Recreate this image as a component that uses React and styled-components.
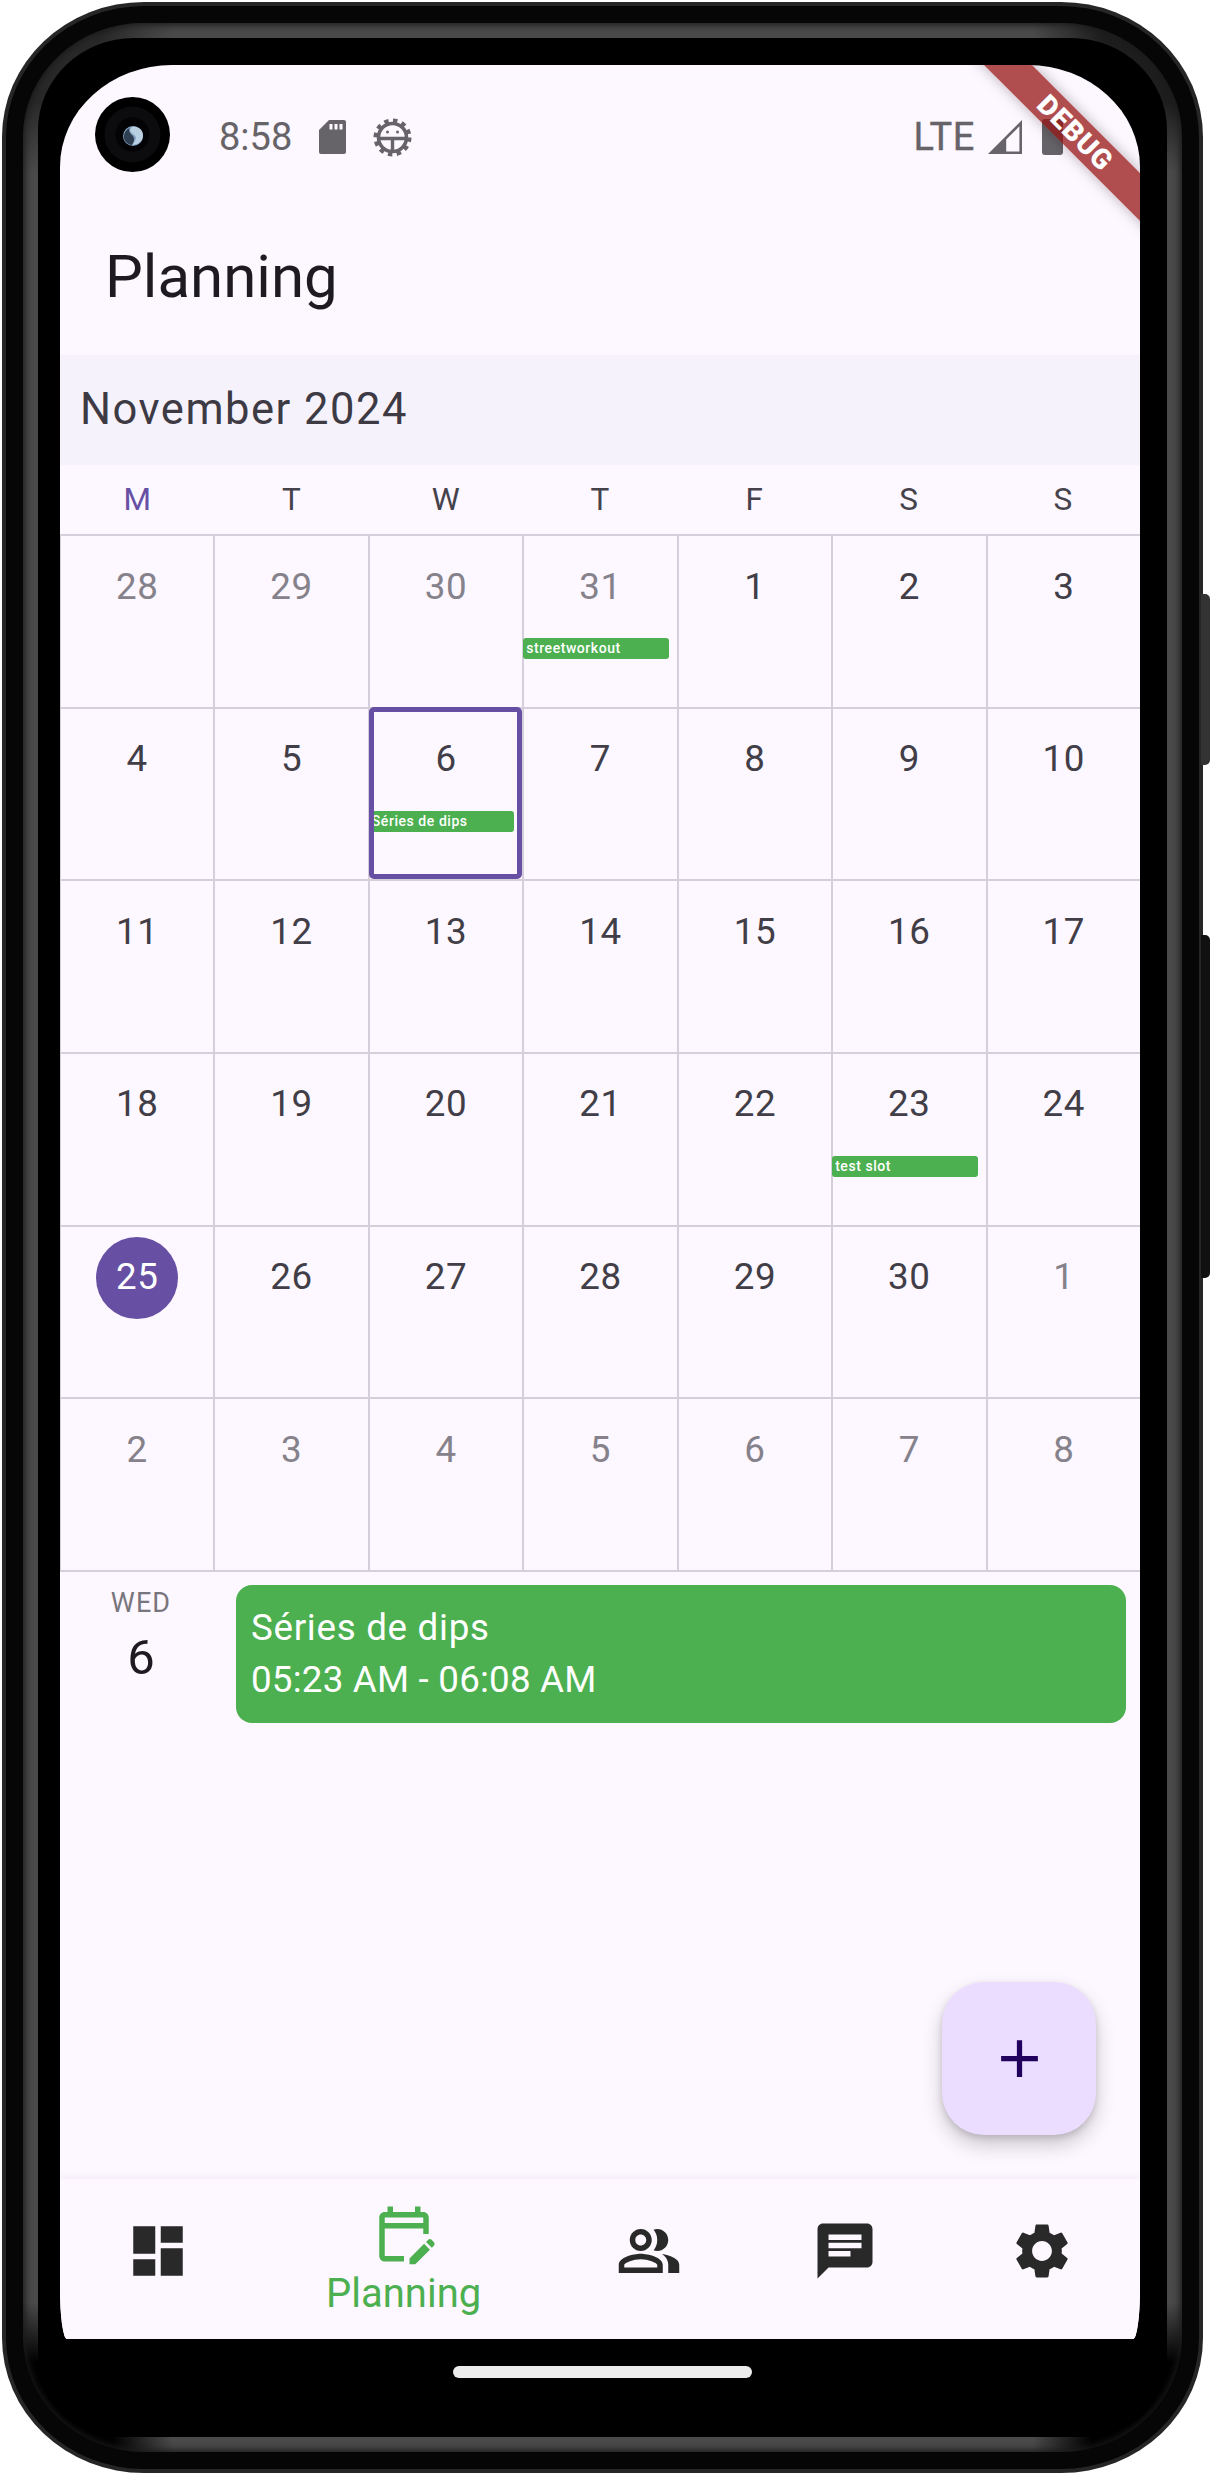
import styled, { createGlobalStyle } from 'styled-components'
import {
	MdDashboard,
	MdOutlineEditCalendar,
	MdOutlinePeopleAlt,
	MdChat,
	MdSettings,
	MdAdd,
} from 'react-icons/md'

const WEEK_DAYS = ['M', 'T', 'W', 'T', 'F', 'S', 'S']

const DAYS = [
	{ n: 28, muted: true },
	{ n: 29, muted: true },
	{ n: 30, muted: true },
	{ n: 31, muted: true, event: 'streetworkout' },
	{ n: 1 },
	{ n: 2 },
	{ n: 3 },
	{ n: 4 },
	{ n: 5 },
	{ n: 6, selected: true, event: 'Séries de dips' },
	...[7, 8, 9, 10, 11, 12, 13, 14, 15, 16, 17, 18, 19, 20, 21, 22].map((n) => ({ n })),
	{ n: 23, event: 'test slot' },
	{ n: 24 },
	{ n: 25, today: true },
	...[26, 27, 28, 29, 30].map((n) => ({ n })),
	...[1, 2, 3, 4, 5, 6, 7, 8].map((n) => ({ n, muted: true })),
]

const NAV_ITEMS = [
	{ icon: MdDashboard },
	{ icon: MdOutlineEditCalendar, label: 'Planning' },
	{ icon: MdOutlinePeopleAlt },
	{ icon: MdChat },
	{ icon: MdSettings },
]

function CameraHole() {
	return (
		<Camera viewBox="0 0 75 75">
			<circle cx="37.5" cy="37.5" r="37.5" fill="#000" />
			<circle cx="37.5" cy="37.5" r="28" fill="#0c0c0f" />
			<circle cx="37.5" cy="37.5" r="17" fill="#030305" />
			<circle cx="38" cy="39" r="10" fill="#7f9fbd" />
			<path d="M38 29.5c-4 2-4 5 0 7.5s4 5-1 11c6 0 11-4 11-9.5s-4-9-10-9z" fill="#b9cfe2" />
			<path d="M35 31c-6 2-8 10-4 14 2 2 4 3 6 3 2-3 3-6 1-9-3-3-5-5-3-8z" fill="#2f3f52" />
		</Camera>
	)
}

function SdIcon() {
	return (
		<svg width="27" height="34" viewBox="0 0 27 34">
			<path d="M10 0H25a2 2 0 0 1 2 2V32a2 2 0 0 1-2 2H2a2 2 0 0 1-2-2V10Z" fill="#666468" />
			<path d="M10.5 4h3V9.5h-3zM15.5 4h3V9.5h-3zM20.5 4h3V9.5h-3z" fill="#fdf7ff" />
		</svg>
	)
}

function DebugIcon() {
	return (
		<svg width="39" height="39" viewBox="0 0 39 39" fill="none">
			<circle cx="19.5" cy="19.5" r="14" stroke="#666468" strokeWidth="3.6" />
			<circle cx="19.5" cy="19.5" r="17" stroke="#666468" strokeWidth="4" strokeDasharray="4.45 4.45" />
			<path d="M7 20.5h25M19.5 20.5V33" stroke="#666468" strokeWidth="3.4" />
			<circle cx="14.5" cy="14" r="1.5" fill="#666468" />
			<circle cx="24.5" cy="14" r="1.5" fill="#666468" />
		</svg>
	)
}

function SignalIcon() {
	return (
		<svg width="34" height="34" viewBox="0 0 34 34">
			<path fillRule="evenodd" d="M34 0V34H0ZM31.4 6.3 18.2 19.5V31.4H31.4Z" fill="#666468" />
		</svg>
	)
}

function App() {
	return (
		<>
			<GlobalStyle />
			<Page>
				<Phone>
					<VolumeButton />
					<PowerButton />
					<Rim>
						<Highlight>
							<Bezel>
								<Screen>
									<CameraHole />
									<Banner>
										<span>DEBUG</span>
									</Banner>
									<StatusBar>
										<StatusGroup>
											<Time>8:58</Time>
											<SdIcon />
											<DebugIcon />
										</StatusGroup>
										<StatusGroup>
											<Lte>LTE</Lte>
											<SignalSlot>
												<SignalIcon />
											</SignalSlot>
											<Battery />
										</StatusGroup>
									</StatusBar>
									<AppBar>Planning</AppBar>
									<MonthBand>November 2024</MonthBand>
									<WeekRow>
										{WEEK_DAYS.map((d, i) => (
											<WeekDay key={i} $active={i === 0}>
												{d}
											</WeekDay>
										))}
									</WeekRow>
									<MonthGrid>
										{DAYS.map((d, i) => (
											<Cell key={i} $selected={d.selected}>
												<DayNumber $muted={d.muted} $today={d.today}>
													{d.n}
												</DayNumber>
												{d.event && <EventBar>{d.event}</EventBar>}
											</Cell>
										))}
									</MonthGrid>
									<Schedule>
										<DateColumn>
											<DateDay>WED</DateDay>
											<DateNumber>6</DateNumber>
										</DateColumn>
										<EventCard>
											<EventTitle>Séries de dips</EventTitle>
											<EventTime>05:23 AM - 06:08 AM</EventTime>
										</EventCard>
										<Fab>
											<MdAdd size={63} />
										</Fab>
									</Schedule>
									<Nav>
										{NAV_ITEMS.map((item, i) => (
											<NavItem key={i} $active={!!item.label}>
												<item.icon size={66} />
												{item.label && <NavLabel>{item.label}</NavLabel>}
											</NavItem>
										))}
									</Nav>
								</Screen>
								<HomeBar />
							</Bezel>
						</Highlight>
					</Rim>
				</Phone>
			</Page>
		</>
	)
}

export default App

const GlobalStyle = createGlobalStyle`
	html, body {
		margin: 0;
		padding: 0;
		background: #fff;
	}
	* {
		box-sizing: border-box;
	}
	body {
		font-family: Roboto, "Liberation Sans", sans-serif;
	}
`

const Page = styled.div`
	width: 1211px;
	height: 2474px;
	padding: 2px 8px 1px 2px;
	overflow: hidden;
`

const Phone = styled.div`
	position: relative;
	width: 1201px;
	height: 2471px;
	padding: 4px;
	background: #262626;
	border-radius: 142px / 135px;
`

const VolumeButton = styled.div`
	position: absolute;
	left: 1199px;
	top: 592px;
	width: 9px;
	height: 171px;
	background: #333;
	border-radius: 0 5px 5px 0;
`

const PowerButton = styled.div`
	position: absolute;
	left: 1199px;
	top: 933px;
	width: 9px;
	height: 343px;
	background: #111;
	border-radius: 0 5px 5px 0;
`

const Rim = styled.div`
	height: 100%;
	padding: 17px;
	background: #060606;
	border-radius: 138px / 131px;
`

const Highlight = styled.div`
	height: 100%;
	padding: 15px;
	background:
		radial-gradient(circle at 0 100%, #000 90px, transparent 150px),
		radial-gradient(circle at 100% 100%, #000 90px, transparent 150px),
		radial-gradient(circle at 0 0, rgba(0, 0, 0, 0.45) 80px, transparent 150px),
		radial-gradient(circle at 100% 0, rgba(0, 0, 0, 0.6) 80px, transparent 150px),
		#4a4a4a;
	border-radius: 120px / 114px;
	box-shadow: inset 0 0 7px 2px #1a1a1a;
`

const Bezel = styled.div`
	height: 100%;
	padding: 27px 22px 0;
	background: #000;
	border-radius: 96px 96px 82px 82px / 92px 92px 78px 78px;
`

const Screen = styled.div`
	position: relative;
	display: flex;
	flex-direction: column;
	width: 1080px;
	height: 2274px;
	overflow: hidden;
	background: #fdf7ff;
	border-radius: 112px 112px 7px 7px / 102px 102px 50px 50px;
`

const Camera = styled.svg`
	position: absolute;
	left: 35px;
	top: 32px;
	width: 75px;
	height: 75px;
`

const Banner = styled.div`
	position: absolute;
	left: 863px;
	top: 48px;
	z-index: 5;
	display: flex;
	align-items: center;
	justify-content: center;
	width: 300px;
	height: 34px;
	padding-left: 7px;
	background: rgba(150, 20, 20, 0.75);
	box-shadow: 0 0 14px rgba(0, 0, 0, 0.28);
	color: #fff;
	font-size: 28px;
	font-weight: 900;
	letter-spacing: 0.8px;
	transform: rotate(45deg);
`

const StatusBar = styled.div`
	display: flex;
	flex-shrink: 0;
	justify-content: space-between;
	height: 122px;
	padding: 22px 77px 0 159px;
`

const StatusGroup = styled.div`
	display: flex;
	align-items: center;
	gap: 27px;
	height: 100px;
`

const Time = styled.span`
	color: #666468;
	font-size: 38px;
	line-height: 1;
`

const Lte = styled.span`
	margin-right: -14px;
	color: #666468;
	font-size: 38px;
	letter-spacing: 0.6px;
	line-height: 1;
	-webkit-text-stroke: 0.4px #666468;
`

const SignalSlot = styled.div`
	display: flex;
	margin-right: -7px;
`

const Battery = styled.div`
	width: 21px;
	height: 36px;
	background: #666468;
	border-radius: 3px;
`

const AppBar = styled.div`
	display: flex;
	flex-shrink: 0;
	align-items: center;
	height: 168px;
	padding: 10px 0 0 45px;
	color: #1d1b20;
	font-size: 60px;
`

const MonthBand = styled.div`
	display: flex;
	flex-shrink: 0;
	align-items: center;
	height: 110px;
	padding: 0 0 2px 20px;
	background: #f6f2fc;
	color: #3d3a44;
	font-size: 43.5px;
	letter-spacing: 1.5px;
`

const WeekRow = styled.div`
	display: grid;
	flex-shrink: 0;
	grid-template-columns: repeat(7, 1fr);
	height: 69px;
`

const WeekDay = styled.div`
	display: flex;
	align-items: center;
	justify-content: center;
	color: ${(props) => (props.$active ? '#6750a4' : '#45424b')};
	font-size: 31.5px;
`

const MonthGrid = styled.div`
	display: grid;
	flex-shrink: 0;
	grid-template-columns: repeat(7, 1fr);
	grid-auto-rows: 172.67px;
	margin-left: -1px;
	border-bottom: 2px solid #d4cfda;
`

const Cell = styled.div`
	position: relative;
	display: flex;
	flex-direction: column;
	align-items: center;
	padding-top: 10px;
	border-top: 2px solid #d4cfda;
	border-left: 2px solid #d4cfda;

	${(props) =>
		props.$selected &&
		`
		&::after {
			content: '';
			position: absolute;
			inset: -2px 0 0 -1px;
			border: 5px solid #6750a4;
			border-radius: 5px;
		}
	`}
`

const DayNumber = styled.div`
	display: flex;
	align-items: center;
	justify-content: center;
	width: 82px;
	height: 82px;
	padding-bottom: 2px;
	border-radius: 50%;
	background: ${(props) => (props.$today ? '#6750a4' : 'transparent')};
	color: ${(props) => (props.$today ? '#fff' : props.$muted ? '#85828b' : '#413e47')};
	font-size: 36.75px;
	letter-spacing: 0.6px;
`

const EventBar = styled.div`
	align-self: stretch;
	height: 21px;
	margin: 10px 8px 0 -1px;
	padding-left: 3px;
	overflow: hidden;
	background: #4caf50;
	border-radius: 3px;
	color: #fff;
	font-size: 14px;
	font-weight: 500;
	letter-spacing: 0.55px;
	line-height: 21px;
	white-space: nowrap;
`

const Schedule = styled.div`
	position: relative;
	display: flex;
	flex: 1;
	align-items: flex-start;
	padding: 13px 14px 0 0;
`

const DateColumn = styled.div`
	display: flex;
	flex-direction: column;
	flex-shrink: 0;
	align-items: center;
	width: 162px;
	margin-right: 14px;
`

const DateDay = styled.div`
	margin-top: 2px;
	color: #79757d;
	font-size: 27px;
	line-height: 32px;
	letter-spacing: 1.1px;
`

const DateNumber = styled.div`
	margin-top: 9px;
	color: #1d1b20;
	font-size: 49px;
	line-height: 60px;
`

const EventCard = styled.div`
	flex: 1;
	height: 138px;
	padding: 17px 15px 0;
	background: #4caf50;
	border-radius: 16px;
`

const EventTitle = styled.div`
	color: #fff;
	font-size: 36.75px;
	letter-spacing: 0.7px;
	line-height: 52px;
`

const EventTime = styled(EventTitle)`
	letter-spacing: 0.2px;
`

const Fab = styled.div`
	position: absolute;
	right: 44px;
	bottom: 44px;
	display: flex;
	align-items: center;
	justify-content: center;
	width: 154px;
	height: 153px;
	background: #eaddff;
	border-radius: 42px;
	box-shadow: 0 10px 20px rgba(0, 0, 0, 0.2), 0 3px 6px rgba(0, 0, 0, 0.12);
	color: #21005d;
`

const Nav = styled.div`
	position: relative;
	display: flex;
	flex-shrink: 0;
	height: 160px;
	background: #fdf7ff;
	box-shadow: 0 -4px 6px rgba(60, 30, 80, 0.035);
`

const NavItem = styled.div`
	display: flex;
	flex: ${(props) => (props.$active ? 3 : 2)};
	flex-direction: column;
	align-items: center;
	padding-top: ${(props) => (props.$active ? 22 : 39)}px;
	color: ${(props) => (props.$active ? '#4caf50' : '#292929')};
`

const NavLabel = styled.div`
	margin-top: 4px;
	font-size: 40px;
	line-height: 46px;
`

const HomeBar = styled.div`
	width: 299px;
	height: 12px;
	margin: 27px auto 0;
	background: #ececec;
	border-radius: 6px;
`
